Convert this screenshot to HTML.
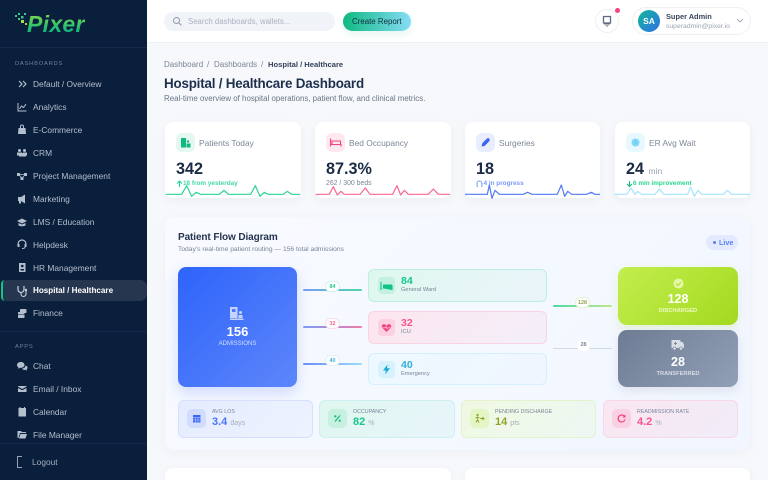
<!DOCTYPE html>
<html><head><meta charset="utf-8"><style>
*{box-sizing:border-box;margin:0;padding:0}
html,body{width:768px;height:480px;overflow:hidden;background:#f6f8fb;font-family:"Liberation Sans",sans-serif;color:#1c2b45}
#root{position:absolute;left:0;top:0;width:768px;height:480px;overflow:hidden;background:#f6f8fb;filter:blur(.3px)}
.a{position:absolute}
.t{position:absolute;white-space:nowrap;line-height:1}
svg{position:absolute;overflow:visible}
#side{left:0;top:0;width:147px;height:480px;background:#0a1f3c}
.m{position:absolute;left:33px;font-size:8.4px;color:#b4bfcd;line-height:10px;white-space:nowrap}
.sec{position:absolute;left:15px;font-size:5.8px;letter-spacing:.75px;color:#6f8099;line-height:8px}
.ic{fill:#b4bfcd}
.card{position:absolute;top:122px;width:136px;height:76px;background:#fff;border-radius:8px;box-shadow:0 3px 10px rgba(30,50,90,.05)}
.ib{position:absolute;left:11px;top:11px;width:19px;height:19px;border-radius:6px}
.cl{position:absolute;left:34px;top:16px;font-size:8.4px;color:#7d8798;line-height:10px;white-space:nowrap}
.cv{position:absolute;left:11px;top:38px;font-size:16.2px;font-weight:bold;color:#1c2b45;line-height:18px;white-space:nowrap}
.cs{position:absolute;left:11px;top:58px;font-size:6.4px;font-weight:bold;line-height:8px;white-space:nowrap}
.mid{position:absolute;left:368px;width:179px;border-radius:6px;border:1px solid}
.mi{position:absolute;left:9px;top:7px;width:17px;height:17px;border-radius:4px}
.mv{position:absolute;left:32px;top:5px;font-size:10.5px;font-weight:bold;line-height:12px}
.ml{position:absolute;left:32px;top:17px;font-size:5.7px;color:#77839a;line-height:7px}
.line{position:absolute;height:1.6px;border-radius:1px}
.pill{position:absolute;height:11px;border-radius:6px;background:#fff;font-size:5.4px;font-weight:bold;text-align:center;line-height:10px}
.st{position:absolute;top:400px;height:38px;border-radius:6px;border:1px solid}
.si{position:absolute;left:8px;top:8px;width:19px;height:19px;border-radius:5px}
.sl{position:absolute;left:33px;top:8px;font-size:5.3px;color:#7a8599;line-height:7px;white-space:nowrap}
.sv{position:absolute;left:33px;top:15px;font-size:11px;font-weight:bold;line-height:13px;white-space:nowrap}
.sv span{font-size:7px;font-weight:normal;color:#a6afbd}
.big{position:absolute;left:618px;width:120px;border-radius:9px;color:#fff;text-align:center}
</style></head><body><div id="root">

<div class="a" id="side">
 <svg style="left:0;top:0" width="147" height="48">
  <g fill="#36c98b"><rect x="15" y="15" width="2" height="2"/><rect x="18" y="13" width="2" height="2"/><rect x="21" y="16" width="2.5" height="2.5"/><rect x="18" y="18" width="2" height="2"/><rect x="21" y="20" width="3" height="3" fill="#a5e04a"/><rect x="24" y="13" width="2" height="2"/><rect x="25" y="23" width="2" height="2" fill="#a5e04a"/></g>
 </svg>
 <div class="t" style="left:27px;top:13px;font-size:23px;font-weight:bold;font-style:italic;letter-spacing:.3px;background:linear-gradient(180deg,#7fdc4e,#17b878 75%);-webkit-background-clip:text;background-clip:text;color:transparent">Pixer</div>
 <div class="a" style="left:0;top:47px;width:147px;height:1px;background:#15294a"></div>
 <div class="sec" style="top:60px">DASHBOARDS</div>

 <svg style="left:0;top:0" width="147" height="480" class="ic">
  <path d="M19 81l3 3-3 3M23 81l3 3-3 3" fill="none" stroke="#b4bfcd" stroke-width="1.2"/>
  <path d="M18 103v8h8.500" fill="none" stroke="#b4bfcd" stroke-width="1"/><path d="M19.500 109l2-3 2 1.500 2.500-3.500" fill="none" stroke="#b4bfcd" stroke-width="1"/>
  <path d="M18.500 128h7l.5 6h-8zM20 128v-1.500a2 2 0 014 0V128h-1v-1.500a1 1 0 00-2 0V128z"/>
  <circle cx="19.500" cy="150.500" r="1.500"/><circle cx="24.500" cy="150.500" r="1.500"/><rect x="17" y="152.500" width="5" height="3"/><rect x="23" y="152.500" width="4" height="3"/><rect x="19" y="153" width="7" height="3.500"/>
  <rect x="17" y="173" width="3" height="3"/><rect x="24" y="173" width="3" height="3"/><rect x="20.500" y="177" width="3" height="3"/><path d="M19 174.500h6M19 175l3 3M25 175l-3 3" stroke="#b4bfcd" stroke-width=".8"/>
  <path d="M18 197h3l4-2.500v9L21 201v2.500h-2V201h-1z"/>
  <path d="M22 218.500l5 2.500-5 2.500-5-2.500z"/><path d="M18.500 223v2.500q3.500 1.500 7 0V223l-3.500 1.500z"/>
  <path d="M18 245v-1a4 4 0 018 0v1" fill="none" stroke="#b4bfcd" stroke-width="1.200"/><rect x="17.500" y="244" width="2" height="3"/><rect x="24.500" y="244" width="2" height="3"/><path d="M25 247q0 1.500-3 1.500" fill="none" stroke="#b4bfcd"/>
  <path d="M19 263h6.500v9H19zM21 266a1.300 1.300 0 102.600 0 1.300 1.300 0 00-2.600 0zM20.500 270.500h3.500v-1.500h-3.500z" fill-rule="evenodd"/>
  <rect x="20" y="309" width="6.500" height="4" rx=".8"/><rect x="18" y="312" width="6.500" height="2" rx=".5"/><rect x="18" y="314.500" width="6.500" height="3.500" rx=".5"/>
  <path d="M21 362c-2.500 0-4 1.300-4 3 0 1 .5 1.800 1.500 2.300l-.5 1.500 2-1c2.500.3 4.500-1 4.500-2.800s-1.500-3-3.500-3z"/><path d="M25.500 365.500c1.500.3 2 1.200 2 2.200 0 .8-.3 1.300-1 1.800l.3 1.200-1.600-.8c-1.500.2-2.800-.5-3.200-1.400 2 0 3.500-1.300 3.500-3z"/>
  <path d="M18 386h8.500v.6L22.200 389 18 386.600zM18 388l4.200 2.300 4.300-2.300v4H18z"/>
  <path d="M18.500 408h7.500v8.500h-7.500zM19.500 407h1v2h-1zM24 407h1v2h-1z"/>
  <path d="M17.500 431h3.500l1 1h4v1h-6l-1.500 5h-1zM20.500 434h6.500l-1.500 4.500h-6.500z"/>
  <path d="M22 456.500h-4.500v11H22" fill="none" stroke="#97a3b5" stroke-width="1" stroke-linejoin="round"/>
 </svg>

 <div class="m" style="top:79px">Default / Overview</div>
 <div class="m" style="top:102px">Analytics</div>
 <div class="m" style="top:125px">E-Commerce</div>
 <div class="m" style="top:148px">CRM</div>
 <div class="m" style="top:171px">Project Management</div>
 <div class="m" style="top:194px">Marketing</div>
 <div class="m" style="top:217px">LMS / Education</div>
 <div class="m" style="top:240px">Helpdesk</div>
 <div class="m" style="top:263px">HR Management</div>

 <div class="a" style="left:1px;top:280px;width:146px;height:21px;background:#26364f;border-radius:7px"></div>
 <div class="a" style="left:1px;top:280px;width:4px;height:21px;border-left:2px solid #10c48a;border-radius:7px 0 0 7px"></div>
 <svg style="left:0;top:280px" width="30" height="21"><path d="M18 6v3.500a3 3 0 006 0V6" fill="none" stroke="#c9d2de" stroke-width="1.200"/><path d="M21 12.500v1.500a2.500 2.500 0 005 0v-3" fill="none" stroke="#c9d2de" stroke-width="1.100"/><circle cx="26" cy="10" r="1.200" fill="#c9d2de"/></svg>
 <div class="m" style="top:285.500px;color:#fff;font-weight:bold;font-size:8.100px">Hospital / Healthcare</div>
 <div class="m" style="top:308px">Finance</div>

 <div class="a" style="left:0;top:331px;width:147px;height:1px;background:#15294a"></div>
 <div class="sec" style="top:343px">APPS</div>
 <div class="m" style="top:361px">Chat</div>
 <div class="m" style="top:384px">Email / Inbox</div>
 <div class="m" style="top:407px">Calendar</div>
 <div class="m" style="top:430px">File Manager</div>
 <div class="a" style="left:0;top:443px;width:147px;height:1px;background:#15294a"></div>
 <div class="m" style="left:32px;top:457px;color:#a3aebe">Logout</div>
</div>

<!-- header -->
<div class="a" style="left:147px;top:0;width:621px;height:43px;background:#fff;border-bottom:1px solid #eef1f5"></div>
<div class="a" style="left:164px;top:12px;width:171px;height:19px;background:#f0f3f8;border-radius:10px"></div>
<svg style="left:172px;top:16px" width="12" height="12"><circle cx="4.500" cy="4.500" r="3" fill="none" stroke="#8f9aab" stroke-width="1"/><path d="M7 7l2.500 2.500" stroke="#8f9aab" stroke-width="1"/></svg>
<div class="t" style="left:188px;top:17.500px;font-size:7.800px;color:#aab3c1">Search dashboards, wallets...</div>
<div class="a" style="left:343px;top:12px;width:68px;height:19px;border-radius:10px;background:linear-gradient(90deg,#10b981,#86dcf7);box-shadow:0 3px 8px rgba(16,185,129,.12)"></div>
<div class="t" style="left:352px;top:17.500px;font-size:7.900px;color:#123042">Create Report</div>
<div class="a" style="left:595px;top:9px;width:24px;height:24px;border-radius:50%;background:#fff;border:1px solid #edf0f4"></div>
<svg style="left:600px;top:14px" width="14" height="14"><path d="M3.500 2.500h7v6.500h-7z" fill="none" stroke="#5d6a80" stroke-width="1.300"/><rect x="4" y="9" width="6" height="1.500" fill="#5d6a80"/><path d="M5 11.500h4l-2 1.300z" fill="#5d6a80"/></svg>
<div class="a" style="left:615px;top:8px;width:5px;height:5px;border-radius:50%;background:#f5437e"></div>
<div class="a" style="left:632px;top:7px;width:119px;height:28px;border-radius:14px;background:#fff;border:1px solid #edf0f4"></div>
<div class="a" style="left:638px;top:10px;width:22px;height:22px;border-radius:50%;background:linear-gradient(135deg,#10b99a,#2f6fe8)"></div>
<div class="t" style="left:638px;top:17px;width:22px;text-align:center;color:#fff;font-weight:bold;font-size:8.500px">SA</div>
<div class="t" style="left:666px;top:13px;font-size:7.400px;font-weight:bold;color:#3a465c">Super Admin</div>
<div class="t" style="left:666px;top:23.500px;font-size:6.800px;color:#9aa4b3">superadmin@pixer.io</div>
<svg style="left:736px;top:17px" width="10" height="8"><path d="M1 2l3 3 3-3" fill="none" stroke="#a3adba" stroke-width="1"/></svg>

<!-- page head -->
<div class="t" style="left:164px;top:61px;font-size:8px;color:#7b8596">Dashboard</div>
<div class="t" style="left:207px;top:61px;font-size:8px;color:#7b8596">/</div>
<div class="t" style="left:214px;top:61px;font-size:8px;color:#7b8596">Dashboards</div>
<div class="t" style="left:261px;top:61px;font-size:8px;color:#7b8596">/</div>
<div class="t" style="left:268px;top:61px;font-size:7.600px;color:#33415a;font-weight:bold">Hospital / Healthcare</div>
<div class="t" style="left:164px;top:76.500px;font-size:13.400px;letter-spacing:-.2px;font-weight:bold;color:#1c2f4c">Hospital / Healthcare Dashboard</div>
<div class="t" style="left:164px;top:95px;font-size:7.900px;color:#6b7688">Real-time overview of hospital operations, patient flow, and clinical metrics.</div>

<!-- cards -->
<div class="card" style="left:165px">
 <div class="ib" style="background:#e4f8f0"></div>
 <svg style="left:11px;top:11px" width="19" height="19"><path d="M5 5h5v9.500H5z" fill="#10b981"/><circle cx="12" cy="8.500" r="1.200" fill="#10b981"/><rect x="10.500" y="10.500" width="4" height="4" fill="#10b981"/></svg>
 <div class="cl">Patients Today</div><div class="cv">342</div>
 <svg style="left:11px;top:58px" width="8" height="8"><path d="M3.500 7V1.500M1 3.500l2.500-2.500L6 3.500" fill="none" stroke="#2bd493" stroke-width="1.100"/></svg>
 <div class="cs" style="left:18px;color:#45d8a1">18 from yesterday</div>
</div>
<div class="card" style="left:315px">
 <div class="ib" style="background:#ffe8ef"></div>
 <svg style="left:11px;top:11px" width="19" height="19"><path d="M4.500 5.500v8M4.500 11.500h10.500v2M6 8h8.500v3.500H6z" fill="none" stroke="#f5437e" stroke-width="1.100"/></svg>
 <div class="cl">Bed Occupancy</div><div class="cv">87.3%</div>
 <div class="cs" style="color:#7d8798;font-weight:normal;font-size:6.900px">262 / 300 beds</div>
</div>
<div class="card" style="left:465px;width:135px">
 <div class="ib" style="background:#e9edff"></div>
 <svg style="left:11px;top:11px" width="19" height="19"><path d="M5.500 13.500l1-3.500 4.500-4.500q2-1 2.500.5t-.5 2.500L8.500 13z" fill="#3b64f6"/></svg>
 <div class="cl">Surgeries</div><div class="cv">18</div>
 <svg style="left:11px;top:58px" width="8" height="8"><path d="M1 5V3.500a2.500 2.500 0 015 0V5" fill="none" stroke="#7a98fa" stroke-width="1"/><path d="M1 5q0 1.500 1 1.500M6 5q0 1.500-1 1.500" stroke="#7a98fa" fill="none"/></svg>
 <div class="cs" style="left:18.500px;color:#7a98fa">4 in progress</div>
</div>
<div class="card" style="left:615px;width:135px">
 <div class="ib" style="background:#e8f8ff"></div>
 <svg style="left:11px;top:11px" width="19" height="19"><circle cx="9.500" cy="9.500" r="4" fill="#7fd7fb"/><path d="M9.500 7.500v2l1.300 1" stroke="#53bde8" stroke-width=".7" fill="none"/></svg>
 <div class="cl">ER Avg Wait</div>
 <div class="cv">24 <span style="font-size:8.500px;font-weight:normal;color:#98a2b1">min</span></div>
 <svg style="left:11px;top:58px" width="8" height="8"><path d="M3.500 1v5.500M1 4l2.500 2.500L6 4" fill="none" stroke="#19b57c" stroke-width="1.100"/></svg>
 <div class="cs" style="left:18px;color:#2bd493">6 min improvement</div>
</div>
<svg style="left:0;top:0" width="768" height="480" fill="none" stroke-width="3.600" stroke-linejoin="round">
 <g transform="translate(160 115) scale(.3333)">
  <polyline stroke="#2fd398" points="17,238 65,238 80,212 95,244 108,232 122,238 178,238 192,226 205,238 272,238 286,212 300,244 313,232 325,238 370,238 382,229 395,238 420,238"/>
  <polyline stroke="#f9668f" points="467,238 508,238 520,215 532,240 543,229 553,238 600,238 616,219 630,238 698,238 711,212 722,240 733,226 745,238 805,238 820,222 835,238 870,238"/>
 </g>
 <g transform="translate(460 115) scale(.3333)">
  <polyline stroke="#5178f7" points="15,238 82,238 88,210 96,250 105,226 118,238 190,238 203,232 216,238 292,238 304,210 314,244 323,229 335,238 380,238 394,232 405,238 420,238"/>
  <polyline stroke="#a6e4fb" points="463,238 500,238 513,219 525,238 533,229 545,238 585,238 598,222 612,238 683,238 692,216 703,244 714,226 725,238 790,238 802,226 815,238 870,238"/>
 </g>
</svg>

<!-- panel -->
<div class="a" style="left:165px;top:217px;width:585px;height:233px;border-radius:9px;background:linear-gradient(135deg,#f8faff,#f1f6ff);box-shadow:0 3px 12px rgba(30,50,90,.04)"></div>
<div class="t" style="left:178px;top:233px;font-size:10px;letter-spacing:-.1px;font-weight:bold;color:#26354f">Patient Flow Diagram</div>
<div class="t" style="left:178px;top:246.500px;font-size:6.700px;color:#7a8598">Today's real-time patient routing — 156 total admissions</div>
<div class="a" style="left:706px;top:235px;width:32px;height:15px;border-radius:8px;background:#e3eaff"></div>
<div class="a" style="left:713px;top:241px;width:3px;height:3px;border-radius:50%;background:#5a7ef8"></div>
<div class="t" style="left:719px;top:238.500px;font-size:7.200px;font-weight:bold;color:#5a7ef8">Live</div>

<!-- admissions -->
<div class="a" style="left:178px;top:267px;width:119px;height:120px;border-radius:8px;background:linear-gradient(135deg,#2e64fb,#5d86fa);box-shadow:0 6px 14px rgba(60,100,250,.2)"></div>
<svg style="left:228px;top:306px" width="20" height="18"><path d="M2 1h7.500v11H2z" fill="#c3d3fd"/><rect x="4" y="3" width="3.500" height="3" fill="#5079f9"/><circle cx="12.500" cy="6.500" r="1.500" fill="#c3d3fd"/><path d="M10.500 9h4v3h-4zM2 12.500h13.500V14H2z" fill="#c3d3fd"/></svg>
<div class="t" style="left:178px;top:325px;width:119px;text-align:center;font-size:13px;font-weight:bold;color:#fff">156</div>
<div class="t" style="left:178px;top:341px;width:119px;text-align:center;font-size:6px;color:#d3defe">ADMISSIONS</div>

<!-- left connectors -->
<div class="line" style="left:303px;top:289px;width:59px;background:linear-gradient(90deg,#7b9cf9,#4cd6ae)"></div>
<div class="line" style="left:303px;top:326px;width:59px;background:linear-gradient(90deg,#7b9cf9,#f17ba8)"></div>
<div class="line" style="left:303px;top:363px;width:59px;background:linear-gradient(90deg,#6a8df8,#9bdcfa)"></div>
<div class="pill" style="left:325px;top:281px;width:15px;color:#2cc88f;border:1px solid #d6f3e8">84</div>
<div class="pill" style="left:325px;top:318px;width:15px;color:#f5648f;border:1px solid #fbdde8">32</div>
<div class="pill" style="left:325px;top:355px;width:15px;color:#3bb4d8;border:1px solid #e6eef7">40</div>

<!-- middle -->
<div class="mid" style="top:269px;height:33px;background:linear-gradient(135deg,#def7ee,#ebf5fb);border-color:#bdeee0">
 <div class="mi" style="background:#c4f0e0"></div>
 <svg style="left:9px;top:7px" width="17" height="17"><path d="M3 5v8M3 11h11v2M5 7.500h9V11H5z" fill="#10c487"/><path d="M3 5v8M14 8v5" stroke="#10c487" stroke-width="1.100"/></svg>
 <div class="mv" style="color:#17c68a">84</div><div class="ml">General Ward</div>
</div>
<div class="mid" style="top:311px;height:33px;background:linear-gradient(135deg,#fde5ee,#f3effa);border-color:#f9d3e2">
 <div class="mi" style="background:#fbd0e0"></div>
 <svg style="left:9px;top:7px" width="17" height="17"><path d="M8.500 13L4.500 9q-1.500-2 0-3.300t3 .1l1 .9 1-.9q1.500-1.400 3-.1t0 3.300z" fill="#f5437e"/><path d="M4 8.800h3l1-1.200 1 2 .8-.8H13" stroke="#fbd0e0" stroke-width=".7" fill="none"/></svg>
 <div class="mv" style="color:#f8558a">32</div><div class="ml">ICU</div>
</div>
<div class="mid" style="top:353px;height:32px;background:linear-gradient(135deg,#edf8ff,#f0f6ff);border-color:#d5effc">
 <div class="mi" style="background:#d8f2fd"></div>
 <svg style="left:9px;top:7px" width="17" height="17"><path d="M9.500 3.500L5 9.500h3L7 13.500l5-6.200H9z" fill="#17a9d9"/></svg>
 <div class="mv" style="color:#33aed6">40</div><div class="ml">Emergency</div>
</div>

<!-- right connectors -->
<div class="line" style="left:553px;top:305px;width:59px;background:linear-gradient(90deg,#4cd8a8,#c0e98a)"></div>
<div class="line" style="left:553px;top:347.500px;width:59px;background:#d3d9e4"></div>
<div class="pill" style="left:575px;top:297px;width:15px;color:#9aa456;border:1px solid #e7f3d0">128</div>
<div class="pill" style="left:577px;top:340px;width:13px;line-height:11px;color:#7c8699">28</div>

<!-- right boxes -->
<div class="big" style="top:267px;height:58px;background:linear-gradient(135deg,#c3ee4e,#a3d91f);box-shadow:0 4px 10px rgba(160,215,40,.18)">
 <svg style="left:55px;top:11px" width="11" height="11"><circle cx="5.500" cy="5.500" r="5" fill="#e6f7a8"/><path d="M3 5.500l2 2 3.200-3.500" fill="none" stroke="#b0dd38" stroke-width="1"/></svg>
 <div class="t" style="left:0;width:120px;top:26px;font-size:12.500px;font-weight:bold">128</div>
 <div class="t" style="left:0;width:120px;top:42px;font-size:5.700px;font-weight:bold;color:#eef8c3">DISCHARGED</div>
</div>
<div class="big" style="top:330px;height:57px;background:linear-gradient(135deg,#6d7c94,#91a0b6);box-shadow:0 4px 10px rgba(100,115,140,.15)">
 <svg style="left:53px;top:9px" width="14" height="12"><path d="M.500 1h8q1 0 1 1v1h2l1.500 2.500V9H.500z" fill="#d8dde6"/><circle cx="3.500" cy="9.500" r="1.600" fill="#d8dde6" stroke="#7a899f" stroke-width=".6"/><circle cx="10" cy="9.500" r="1.600" fill="#d8dde6" stroke="#7a899f" stroke-width=".6"/><path d="M4.500 3v3M3 4.500h3" stroke="#7a899f" stroke-width=".9"/></svg>
 <div class="t" style="left:0;width:120px;top:25.500px;font-size:12.500px;font-weight:bold">28</div>
 <div class="t" style="left:0;width:120px;top:41.500px;font-size:5.700px;font-weight:bold;color:#d9dee7">TRANSFERRED</div>
</div>

<!-- stats -->
<div class="st" style="left:178px;width:135px;background:linear-gradient(135deg,#e5ecff,#edf2fe);border-color:#d6e0fd">
 <div class="si" style="background:#d2ddfd"></div>
 <svg style="left:8px;top:8px" width="19" height="19"><path d="M6 6h7.500v7.500H6z" fill="#3d66f6"/><path d="M6 8.500h7.500M8.500 8.500v5M11 8.500v5M6 11h7.500" stroke="#d2ddfd" stroke-width=".5"/></svg>
 <div class="sl">AVG LOS</div><div class="sv" style="color:#4f75f7">3.4 <span>days</span></div>
</div>
<div class="st" style="left:319px;width:136px;background:linear-gradient(135deg,#dff6ef,#e8f5fb);border-color:#cdeff0">
 <div class="si" style="background:#c6f0e0"></div>
 <svg style="left:8px;top:8px" width="19" height="19"><path d="M7 12.500l5-6" stroke="#10b981" stroke-width="1.100"/><circle cx="7.300" cy="7.300" r="1.100" fill="#10b981"/><circle cx="11.700" cy="11.700" r="1.100" fill="#10b981"/></svg>
 <div class="sl">OCCUPANCY</div><div class="sv" style="color:#1ac88e">82 <span>%</span></div>
</div>
<div class="st" style="left:461px;width:135px;background:linear-gradient(135deg,#f0f8e2,#eef7f3);border-color:#e3f3cd">
 <div class="si" style="background:#e4f5c6"></div>
 <svg style="left:8px;top:8px" width="19" height="19"><circle cx="7.500" cy="6" r="1.100" fill="#92a32e"/><path d="M7.500 7.500v3l-1.500 3M7.500 10.500l1.500 3M5.500 9l2-1 2 1M10 9.500h4M12.500 8l1.500 1.500-1.500 1.500" stroke="#92a32e" stroke-width=".9" fill="none"/></svg>
 <div class="sl">PENDING DISCHARGE</div><div class="sv" style="color:#8fa32c">14 <span>pts</span></div>
</div>
<div class="st" style="left:603px;width:135px;background:linear-gradient(135deg,#fae6f0,#f0edf9);border-color:#f8d8e6">
 <div class="si" style="background:#f8d2e3"></div>
 <svg style="left:8px;top:8px" width="19" height="19"><path d="M12.500 7.500a3.500 3.500 0 10.500 3" fill="none" stroke="#f5437e" stroke-width="1.200"/><path d="M13.500 5.500v3h-3z" fill="#f5437e"/></svg>
 <div class="sl">READMISSION RATE</div><div class="sv" style="color:#f8558a">4.2 <span>%</span></div>
</div>

<!-- bottom cards -->
<div class="a" style="left:165px;top:468px;width:286px;height:30px;background:#fff;border-radius:8px;box-shadow:0 3px 10px rgba(30,50,90,.05)"></div>
<div class="a" style="left:465px;top:468px;width:285px;height:30px;background:#fff;border-radius:8px;box-shadow:0 3px 10px rgba(30,50,90,.05)"></div>

</div></body></html>
